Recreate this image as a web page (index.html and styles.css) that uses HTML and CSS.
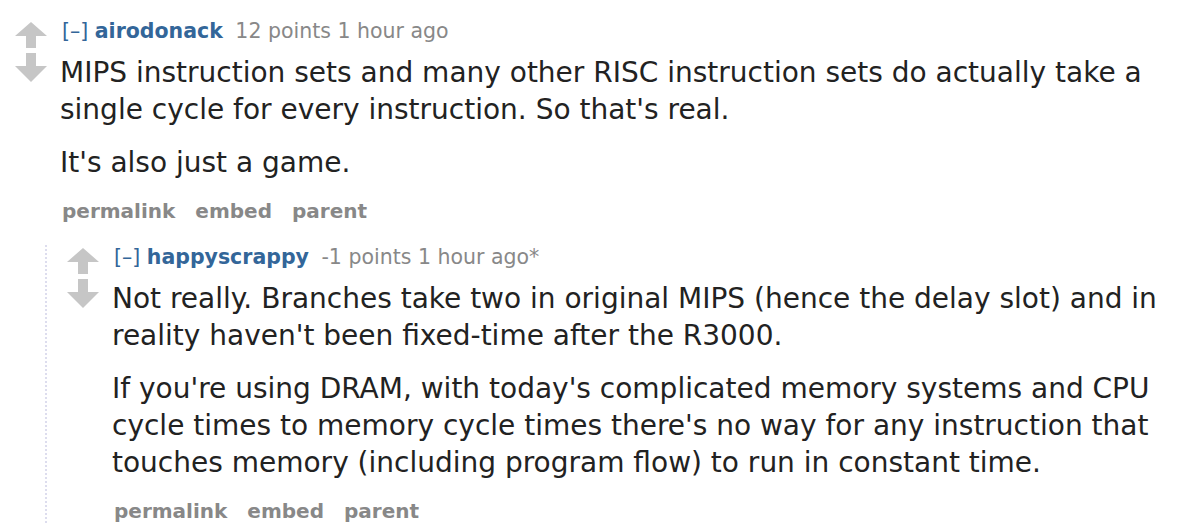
FILE: index.html
```html
<!DOCTYPE html>
<html>
<head>
<meta charset="utf-8">
<link rel="stylesheet" href="styles.css">
</head>
<body>
<div class="thread">
  <div class="comment">
    <div class="votes">
      <svg class="arrow up" viewBox="0 0 32 26" width="32" height="26"><path d="M16 0 L32 14 L21 14 L21 26 L11 26 L11 14 L0 14 Z" fill="#c6c6c6"/></svg>
      <svg class="arrow down" viewBox="0 0 32 29" width="32" height="29"><path d="M11 0 L21 0 L21 13 L32 13 L16 29 L0 13 L11 13 Z" fill="#c6c6c6"/></svg>
    </div>
    <div class="entry">
      <div class="tagline"><span class="expand">[–]</span> <span class="author">airodonack</span> <span class="score">12 points</span> <span class="time">1 hour ago</span></div>
      <div class="md">
        <p>MIPS instruction sets and many other RISC instruction sets do actually take a single cycle for every instruction. So that's real.</p>
        <p>It's also just a game.</p>
      </div>
      <ul class="buttons"><li>permalink</li><li>embed</li><li>parent</li></ul>
      <div class="child">
        <div class="comment">
          <div class="votes">
            <svg class="arrow up" viewBox="0 0 32 26" width="32" height="26"><path d="M16 0 L32 14 L21 14 L21 26 L11 26 L11 14 L0 14 Z" fill="#c6c6c6"/></svg>
            <svg class="arrow down" viewBox="0 0 32 29" width="32" height="29"><path d="M11 0 L21 0 L21 13 L32 13 L16 29 L0 13 L11 13 Z" fill="#c6c6c6"/></svg>
          </div>
          <div class="entry">
            <div class="tagline"><span class="expand">[–]</span> <span class="author">happyscrappy</span> <span class="score">-1 points</span> <span class="time">1 hour ago*</span></div>
            <div class="md">
              <p>Not really. Branches take two in original MIPS (hence the delay slot) and in reality haven't been fixed-time after the R3000.</p>
              <p>If you're using DRAM, with today's complicated memory systems and CPU cycle times to memory cycle times there's no way for any instruction that touches memory (including program flow) to run in constant time.</p>
            </div>
            <ul class="buttons"><li>permalink</li><li>embed</li><li>parent</li></ul>
          </div>
        </div>
      </div>
    </div>
  </div>
</div>
</body>
</html>
```

FILE: styles.css
```css
html, body {
  margin: 0;
  padding: 0;
  background: #fff;
}
body {
  font-family: "DejaVu Sans", Verdana, sans-serif;
  color: #222;
  overflow: hidden;
  height: 523px;
}
.thread {
  padding: 19px 4px 0 15px;
}
.comment {
  display: flex;
  align-items: flex-start;
}
.votes {
  display: flex;
  flex-direction: column;
  align-items: center;
  width: 32px;
  gap: 5px;
  margin-top: 3px;
  flex-shrink: 0;
}
.arrow { display: block; }
.entry {
  flex: 1;
  min-width: 0;
  margin-left: 13px;
}
.tagline {
  font-size: 20.5px;
  line-height: 24px;
  color: #888;
  padding-left: 2px;
}
.expand { color: #369; }
.author { color: #369; font-weight: bold; margin-right: 6px; }
.md {
  font-size: 28px;
  line-height: 37px;
  color: #222;
}
.md p {
  margin: 11px 0 16px;
}
.md p + p { margin-top: 0; }
.buttons {
  list-style: none;
  margin: 0;
  padding: 2px 0 0 2px;
  display: flex;
  gap: 20px;
  font-size: 20px;
  line-height: 24px;
  font-weight: bold;
  color: #888;
}
.child {
  margin-top: 22px;
  margin-left: -15px;
  border-left: 2px dotted #dde;
  padding-left: 20px;
}
```
